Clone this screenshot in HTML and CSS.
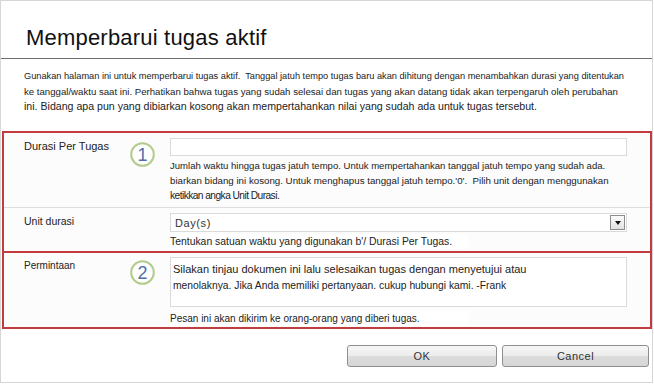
FILE: index.html
```html
<!DOCTYPE html>
<html lang="id">
<head>
    <meta charset="UTF-8">
    <meta name="viewport" content="width=device-width, initial-scale=1.0">
    <title>Memperbarui tugas aktif</title>
    <link rel="stylesheet" href="styles.css">
</head>
<body>
    <div class="dialog">
        <h1 class="title">Memperbarui tugas aktif</h1>

        <div class="intro">
            <span class="intro_line1">Gunakan halaman ini untuk memperbarui tugas aktif.&nbsp; Tanggal jatuh tempo tugas baru akan dihitung dengan menambahkan durasi yang ditentukan</span><br>
            <span class="intro_line2">ke tanggal/waktu saat ini. Perhatikan bahwa tugas yang sudah selesai dan tugas yang akan datang tidak akan terpengaruh oleh perubahan</span><br>
            <span class="intro_line3">ini. Bidang apa pun yang dibiarkan kosong akan mempertahankan nilai yang sudah ada untuk tugas tersebut.</span>
        </div>

        <!-- 1 -->
        <div class="group">
            <div class="row row_line">
                <div class="label">Durasi Per Tugas</div>
                <div class="marker">
                    <svg width="25" height="25" viewBox="0 0 25 25">
                        <circle cx="12.5" cy="12.5" r="11.3" fill="#fff" stroke="#b3cb8c" stroke-width="2"/>
                        <text x="12.5" y="19" text-anchor="middle" class="marker_num">1</text>
                    </svg>
                </div>
                <div class="field">
                    <div class="text_input"></div>
                    <div class="help">
                        <span class="help_a">Jumlah waktu hingga tugas jatuh tempo. Untuk mempertahankan tanggal jatuh tempo yang sudah ada.</span><br>
                        <span class="help_b">biarkan bidang ini kosong. Untuk menghapus tanggal jatuh tempo.'0'.&nbsp; Pilih unit dengan menggunakan</span><br>
                        <span class="help_c">ketikkan angka Unit Durasi.</span>
                    </div>
                </div>
            </div>
            <div class="row row_last">
                <div class="label label_unit">Unit durasi</div>
                <div class="marker"></div>
                <div class="field">
                    <div class="select">
                        <span class="select_value">Day(s)</span>
                        <span class="select_btn"><span class="arrow"></span></span>
                    </div>
                    <div class="help help_one"><span class="help_strip">Tentukan satuan waktu yang digunakan b'/ Durasi Per Tugas.</span></div>
                </div>
            </div>
        </div>

        <!-- 2 -->
        <div class="group group_second">
            <div class="row row_msg">
                <div class="label label_msg">Permintaan</div>
                <div class="marker marker_msg">
                    <svg width="25" height="25" viewBox="0 0 25 25">
                        <circle cx="12.5" cy="12.5" r="11.3" fill="#fff" stroke="#b3cb8c" stroke-width="2"/>
                        <text x="12.5" y="19" text-anchor="middle" class="marker_num">2</text>
                    </svg>
                </div>
                <div class="field">
                    <div class="textarea">Silakan tinjau dokumen ini lalu selesaikan tugas dengan menyetujui atau<br><span class="textarea_line2">menolaknya. Jika Anda memiliki pertanyaan. cukup hubungi kami. -Frank</span></div>
                    <div class="help help_small"><span class="help_strip">Pesan ini akan dikirim ke orang-orang yang diberi tugas.</span></div>
                </div>
            </div>
        </div>

        <div class="actions">
            <button class="btn btn_ok">OK</button>
            <button class="btn btn_cancel">Cancel</button>
        </div>
    </div>
</body>
</html>
```

FILE: styles.css
```css
body{
    margin: 0;
    background: #fff;
    font-family: "Liberation Sans", Arial, sans-serif;
    color: #1e1e1e;
}

.dialog{
    width: 653px;
    height: 383px;
    box-sizing: border-box;
    border: 1px solid #d6d6d6;
    background: #fff;
}

.title{
    margin: 0;
    padding: 24px 0 7px 25px;
    font-size: 22px;
    line-height: 26px;
    font-weight: normal;
    letter-spacing: 0.2px;
    color: #111;
    border-bottom: 1px solid #6e6e6e;
}

.intro{
    padding: 10px 0 0 23px;
    font-size: 9px;
    line-height: 15px;
    white-space: nowrap;
    color: #222;
}

/* 行ごとに文字サイズが違うので、行の高さがずれないように top 揃え */
.intro span{ vertical-align: top; }

.intro_line1{ font-size: 9.22px; }
.intro_line2{ font-size: 9.65px; }
.intro_line3{ font-size: 10.6px; }

.group{
    margin: 17px 0 0 1px;
    width: 650px;
    box-sizing: border-box;
    border: 2px solid #c23c3f;
    background: #fcfcfc;
}

.group_second{
    margin-top: -2px;
}

.row{
    display: grid;
    grid-template-columns: 104px 42px 457px;
    padding: 5px 0 4px 20px;
}

.row_line{
    border-bottom: 1px solid #dedede;
}

.row_last{
    padding-bottom: 2px;
}

.row_msg{
    padding: 4px 0 1px 20px;
}

.label{
    padding-top: 1px;
    font-size: 11px;
    line-height: 14px;
    color: #222;
}

.label_unit{
    font-size: 10.5px;
}

.label_msg{
    padding-top: 2px;
    font-size: 10px;
}

.marker{
    padding: 4px 0 0 2px;
}

.marker_msg{
    padding-top: 3px;
}

.marker svg{
    display: block;
}

.marker_num{
    font-family: "Liberation Sans", Arial, sans-serif;
    font-size: 18px;
    fill: #4f6fa9;
}

.text_input{
    height: 18px;
    box-sizing: border-box;
    border: 1px solid #dadada;
    background: #fff;
}

.help{
    padding-top: 2px;
    font-size: 9px;
    line-height: 15px;
    white-space: nowrap;
    color: #222;
}

.help span{ vertical-align: top; }

.help_a{ font-size: 9.55px; }
.help_b{ font-size: 9.73px; }
.help_c{ font-size: 10.2px; letter-spacing: -0.55px; }

.help_one{
    font-size: 10.4px;
}

.help_small{
    padding-top: 4px;
    font-size: 10px;
}

.help_strip{
    display: inline-block;
    width: 298px;
    background: #fff;
}

.select{
    display: flex;
    align-items: center;
    justify-content: space-between;
    height: 19px;
    box-sizing: border-box;
    border: 1px solid #dadada;
    background: #fff;
    padding: 0 1px 0 4px;
}

.select_value{
    font-size: 11px;
    letter-spacing: 0.6px;
    color: #333;
}

.select_btn{
    display: flex;
    align-items: center;
    justify-content: center;
    width: 15px;
    height: 15px;
    box-sizing: border-box;
    border: 1px solid #8d8d8d;
    background: linear-gradient(#fbfbfb, #e2e2e2);
}

.arrow{
    width: 0;
    height: 0;
    border-left: 3.5px solid transparent;
    border-right: 3.5px solid transparent;
    border-top: 4px solid #111;
}

.textarea{
    height: 50px;
    box-sizing: border-box;
    border: 1px solid #dadada;
    background: #fff;
    padding: 3px 2px;
    font-size: 11px;
    line-height: 16px;
    white-space: nowrap;
    color: #222;
}

.textarea_line2{
    font-size: 10.3px;
}

.actions{
    display: flex;
    justify-content: flex-end;
    gap: 5px;
    margin-top: 16px;
    padding-right: 3px;
}

.btn{
    height: 22px;
    padding: 0;
    border: 1px solid #8f8f8f;
    border-radius: 3px;
    background: linear-gradient(#f6f6f6 0%, #ececec 50%, #dcdcdc 51%, #d6d6d6 100%);
    font-family: "Liberation Sans", Arial, sans-serif;
    font-size: 11px;
    letter-spacing: 0.5px;
    color: #333;
}

.btn_ok{ width: 150px; }
.btn_cancel{ width: 147px; }
```
